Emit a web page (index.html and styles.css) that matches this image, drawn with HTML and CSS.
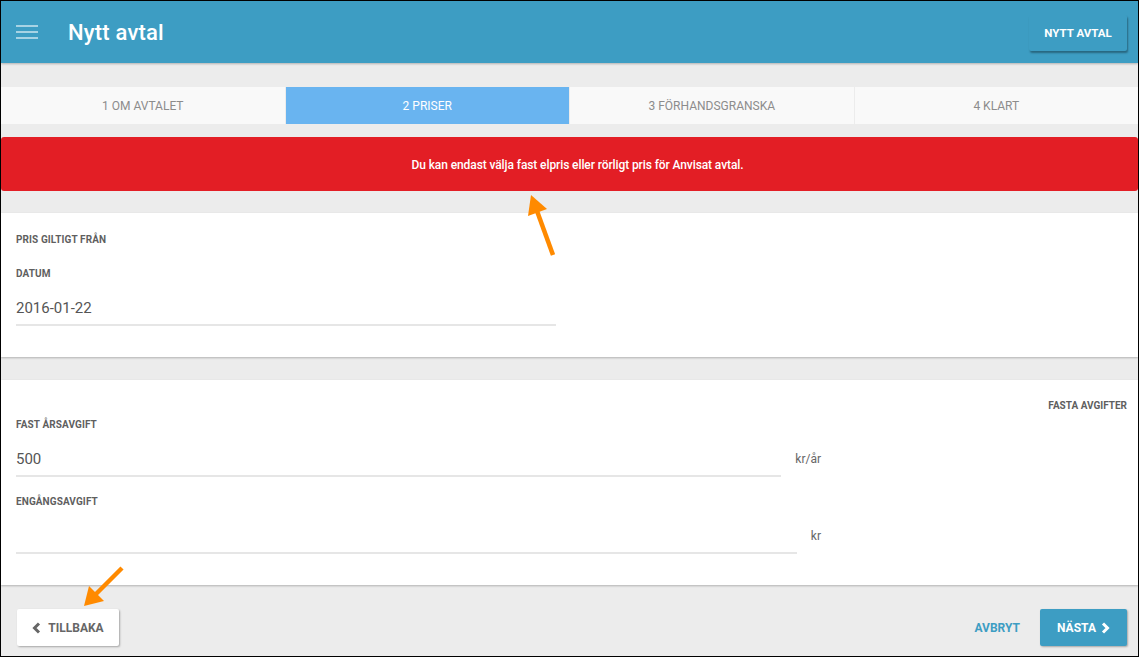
FILE: index.html
```html
<!DOCTYPE html>
<html>
 <head>
  <meta charset="utf-8">
  <title>Nytt avtal</title>
  <link rel="stylesheet" href="styles.css">
 </head>
 <body>
  <div class="frame">
    <header class="topbar">
      <button class="menu"><span></span><span></span><span></span></button>
      <h1 class="title">Nytt avtal</h1>
      <button class="btn-new">NYTT AVTAL</button>
    </header>

    <main class="content">
      <nav class="steps">
        <div class="step">1 OM AVTALET</div>
        <div class="step active">2 PRISER</div>
        <div class="step">3 FÖRHANDSGRANSKA</div>
        <div class="step">4 KLART</div>
      </nav>

      <div class="alert">Du kan endast välja fast elpris eller rörligt pris för Anvisat avtal.</div>

      <section class="card card-date">
        <p class="field-label">PRIS GILTIGT FRÅN</p>
        <p class="field-label sub">DATUM</p>
        <div class="field-value date">2016-01-22</div>
      </section>

      <section class="card card-fees">
        <h2 class="card-heading">FASTA AVGIFTER</h2>
        <p class="field-label">FAST ÅRSAVGIFT</p>
        <div class="fee-row">
          <div class="field-value">500</div>
          <span class="unit">kr/år</span>
        </div>
        <p class="field-label next">ENGÅNGSAVGIFT</p>
        <div class="fee-row">
          <div class="field-value"></div>
          <span class="unit">kr</span>
        </div>
      </section>
    </main>

    <footer class="actions">
      <button class="btn-back">
        <svg width="9" height="12" viewBox="0 0 9 12"><polyline points="7,1.5 2.5,6 7,10.5" fill="none" stroke="#666" stroke-width="3"/></svg>
        TILLBAKA
      </button>
      <span class="spacer"></span>
      <button class="btn-cancel">AVBRYT</button>
      <button class="btn-next">
        NÄSTA
        <svg width="9" height="12" viewBox="0 0 9 12"><polyline points="2,1.5 6.5,6 2,10.5" fill="none" stroke="#fff" stroke-width="3"/></svg>
      </button>
    </footer>

    <!-- markeringspilar -->
    <svg class="marks" width="1139" height="657" viewBox="0 0 1139 657">
      <line x1="553" y1="255" x2="537" y2="211" stroke="#ff8a00" stroke-width="4.5"/>
      <polygon points="531,195 528,216 547,209" fill="#ff8a00"/>
      <line x1="122" y1="568" x2="96" y2="594" stroke="#ff8a00" stroke-width="4.5"/>
      <polygon points="84,606 104,601 89,586" fill="#ff8a00"/>
    </svg>
  </div>
 </body>
</html>
```

FILE: styles.css
```css
* {
  margin: 0;
  padding: 0;
  box-sizing: border-box;
}
body {
  font-family: Roboto, "Liberation Sans", sans-serif;
  background: #fff;
}
button {
  font-family: inherit;
  border: 0;
  background: none;
  cursor: pointer;
}

.frame {
  position: relative;
  width: 1139px;
  height: 657px;
  border: 1px solid #000;
  background: #ececec;
  display: flex;
  flex-direction: column;
  overflow: hidden;
}

/* header */
.topbar {
  flex: none;
  height: 62px;
  background: #3d9dc3;
  display: flex;
  align-items: center;
  padding: 0 11px 0 15px;
  box-shadow: 0 1px 2px rgba(0, 0, 0, .25);
  position: relative;
  z-index: 1;
}
.menu {
  width: 22px;
  height: 14px;
  display: flex;
  flex-direction: column;
  justify-content: space-between;
}
.menu span {
  display: block;
  width: 22px;
  height: 2px;
  background: rgba(255, 255, 255, .55);
}
.title {
  flex: 1;
  margin-left: 30px;
  font-size: 22px;
  font-weight: 500;
  color: #fff;
  letter-spacing: .2px;
}
.btn-new {
  width: 98px;
  height: 36px;
  margin-top: 1px;
  border-radius: 2px;
  background: #3d9dc3;
  box-shadow: 1px 2px 2px rgba(0, 0, 0, .35);
  color: #fff;
  font-size: 11.5px;
  font-weight: 700;
}

/* content */
.content {
  flex: none;
  padding-top: 24px;
}
.steps {
  display: grid;
  grid-template-columns: repeat(4, 1fr);
  column-gap: 1px;
  height: 37px;
}
.step {
  background: #f9f9f9;
  color: #8c8c8c;
  font-size: 12px;
  display: flex;
  align-items: center;
  justify-content: center;
}
.step.active {
  background: #69b4f0;
  color: #fff;
}

.alert {
  margin-top: 13px;
  height: 54px;
  padding: 1px 0 0 16px;
  border-radius: 3px;
  background: #e31e25;
  color: #fff;
  font-size: 12px;
  font-weight: 500;
  letter-spacing: -.1px;
  display: flex;
  align-items: center;
  justify-content: center;
}

.card {
  background: #fff;
  box-shadow: 0 1px 2px rgba(0, 0, 0, .25);
  padding: 0 11px 0 15px;
}
.card-date {
  margin-top: 22px;
  height: 144px;
  padding-top: 20px;
}
.card-fees {
  margin-top: 23px;
  height: 205px;
  padding-top: 19px;
}

.card-heading {
  font-size: 10px;
  line-height: 14px;
  font-weight: 700;
  color: #5f5f5f;
  text-align: right;
  margin-bottom: 5px;
}
.field-label {
  font-size: 10px;
  line-height: 14px;
  font-weight: 700;
  color: #5f5f5f;
  letter-spacing: .1px;
}
.field-label.sub {
  margin-top: 20px;
}
.field-label.next {
  margin-top: 18px;
}
.field-value {
  height: 28px;
  padding-bottom: 7px;
  border-bottom: 2px solid #e6e6e6;
  font-size: 15px;
  line-height: 20px;
  color: #555;
}
.field-value.date {
  width: 540px;
  margin-top: 17px;
}

.fee-row {
  width: 805px;
  display: flex;
  align-items: flex-start;
  gap: 14px;
  margin-top: 17px;
}
.fee-row .field-value {
  flex: 1;
}
.unit {
  font-size: 12px;
  line-height: 20px;
  color: #666;
}

/* footer */
.actions {
  flex: 1;
  display: flex;
  align-items: flex-start;
  padding: 24px 11px 0 16px;
}
.spacer {
  flex: 1;
}
.btn-back {
  height: 37px;
  width: 102px;
  border-radius: 2px;
  background: #fff;
  box-shadow: 1px 1px 2px rgba(0, 0, 0, .3);
  color: #666;
  font-size: 12px;
  font-weight: 700;
  display: flex;
  align-items: center;
  justify-content: center;
  gap: 7px;
}
.btn-cancel {
  height: 37px;
  margin-right: 20px;
  color: #3d9dc3;
  font-size: 12px;
  font-weight: 700;
}
.btn-next {
  height: 37px;
  width: 87px;
  border-radius: 2px;
  background: #3d9dc3;
  box-shadow: 1px 1px 2px rgba(0, 0, 0, .3);
  color: #fff;
  font-size: 12px;
  font-weight: 700;
  display: flex;
  align-items: center;
  justify-content: center;
  gap: 5px;
}

.marks {
  position: absolute;
  top: -1px;
  left: -1px;
  pointer-events: none;
}
```
